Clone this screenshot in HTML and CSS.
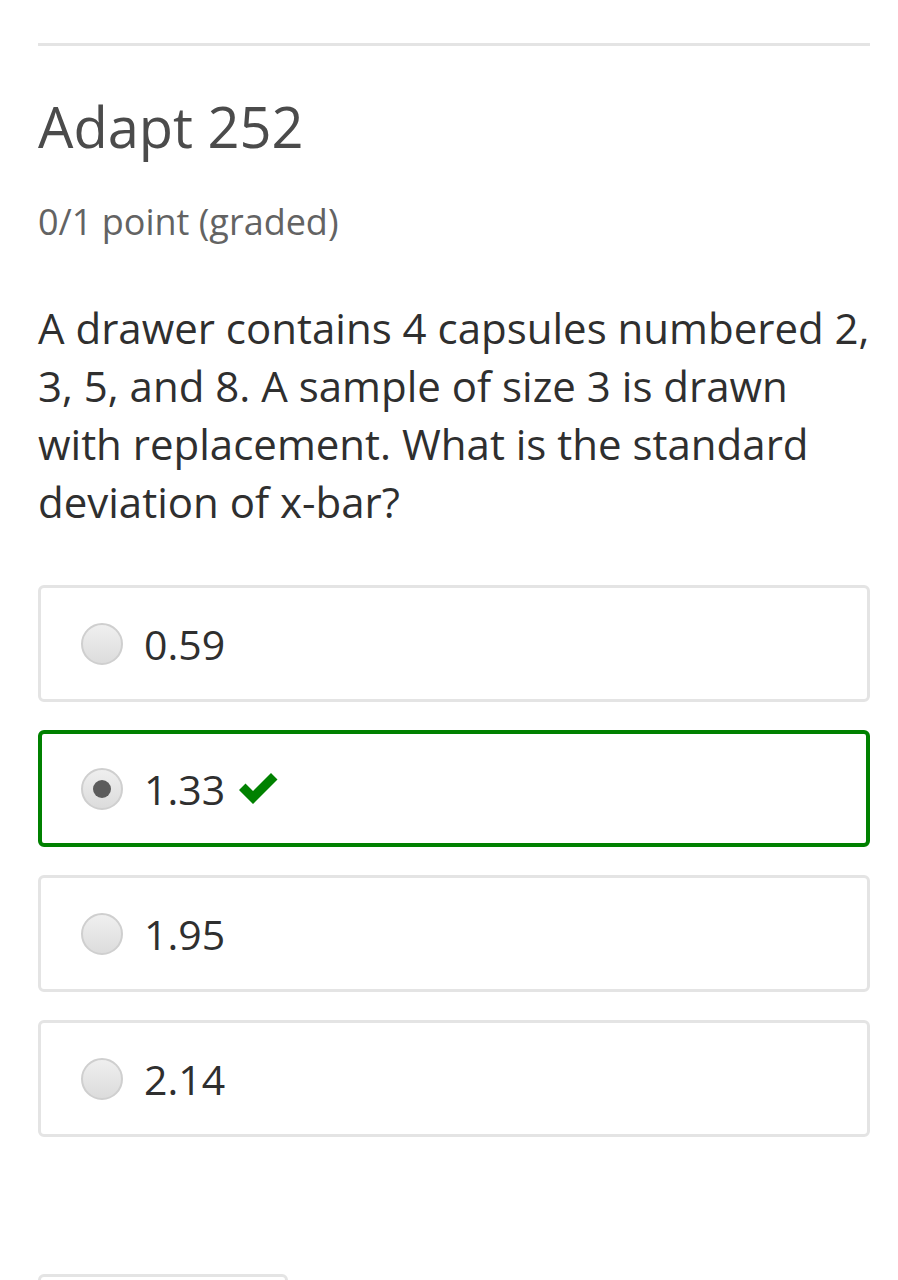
FILE: index.html
```html
<!DOCTYPE html>
<html>
<head>
<meta charset="utf-8">
<link rel="stylesheet" href="styles.css">
</head>
<body>
<div class="page">
  <hr class="rule">
  <h2 class="title">Adapt 252</h2>
  <div class="points">0/1 point (graded)</div>
  <p class="question">A drawer contains 4 capsules numbered 2, 3, 5, and 8. A sample of size 3 is drawn with replacement. What is the standard deviation of x-bar?</p>
  <div class="options">
    <label class="option"><span class="radio"></span><span class="label">0.59</span></label>
    <label class="option correct"><span class="radio checked"></span><span class="label">1.33</span>
      <svg class="check" width="42" height="32" viewBox="0 0 42 32"><path d="M1 17 L7.5 10.5 L15 18 L33 0 L39.5 6.5 L15 31 Z" fill="#008100"/></svg>
    </label>
    <label class="option"><span class="radio"></span><span class="label">1.95</span></label>
    <label class="option"><span class="radio"></span><span class="label">2.14</span></label>
  </div>
  <div class="next"></div>
</div>
</body>
</html>
```
FILE: styles.css
```css
html, body {
  margin: 0;
  padding: 0;
  background: #fff;
}
body {
  font-family: "Open Sans", "Noto Sans", sans-serif;
  color: #333;
  overflow: hidden;
  height: 1280px;
}
.page {
  padding: 43px 28px 0 38px;
}
.rule {
  margin: 0;
  border: 0;
  height: 3px;
  background: #e4e4e4;
}
.title {
  margin: 40px 0 0;
  font-weight: 400;
  font-size: 56px;
  line-height: 80px;
  color: #4b4b4b;
}
.points {
  margin-top: 32px;
  font-size: 36px;
  line-height: 48px;
  color: #636363;
}
.question {
  margin: 53px 0 0;
  font-size: 42px;
  line-height: 58px;
  color: #2f2f2f;
}
.options {
  margin-top: 54px;
  display: flex;
  flex-direction: column;
  gap: 28px;
}
.option {
  height: 111px;
  border: 3px solid #e4e4e4;
  border-radius: 6px;
  display: flex;
  align-items: center;
  padding-left: 40px;
  box-sizing: content-box;
}
.option.correct {
  border: 4px solid #008100;
  height: 109px;
  padding-left: 39px;
}
.radio {
  width: 38px;
  height: 38px;
  border-radius: 50%;
  border: 2px solid #cfcfcf;
  background: linear-gradient(#efefef, #dcdcdc);
  display: flex;
  align-items: center;
  justify-content: center;
  flex: none;
}
.radio.checked::after {
  content: "";
  width: 18px;
  height: 18px;
  border-radius: 50%;
  background: #5c5c5c;
}
.label {
  margin-left: 21px;
  font-size: 41px;
  color: #2f2f2f;
}
.check {
  margin-left: 13px;
}
.next {
  margin-top: 137px;
  width: 244px;
  height: 40px;
  border: 3px solid #e4e4e4;
  border-radius: 6px;
}
```
